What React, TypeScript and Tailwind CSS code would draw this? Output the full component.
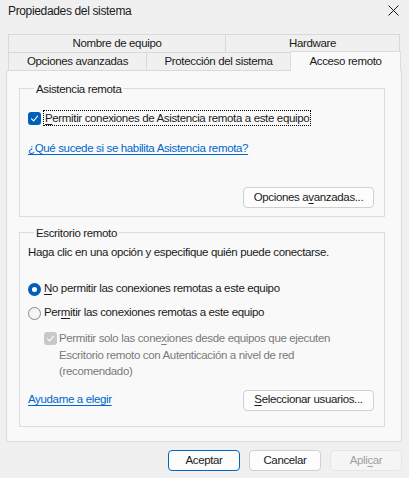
import React from 'react';

const Check = ({ color = 'white' }: { color?: string }) => (
  <svg width="9" height="9" viewBox="0 0 9 9" fill="none">
    <path d="M1.5 4.8 L3.6 6.8 L7.6 2.2" stroke={color} strokeWidth="1.1" strokeLinecap="round" strokeLinejoin="round" />
  </svg>
);

const GroupBox = ({ title, children, className }: { title: string; children: React.ReactNode; className?: string }) => (
  <div className={`border border-[#dcdcdc] ${className ?? ''}`}>
    <div className="-mt-[8px] ml-[6px] px-[2px] w-fit bg-[#f9f9f9] h-4 leading-4">{title}</div>
    {children}
  </div>
);

const Button = ({ children, width, primary, disabled }: { children: React.ReactNode; width: string; primary?: boolean; disabled?: boolean }) => (
  <div
    className={`h-[21px] ${width} rounded-[4px] flex items-center justify-center border ${
      primary
        ? 'border-[#0067c0] bg-[#fdfdfd] text-[#1a1a1a]'
        : disabled
        ? 'border-[#e5e5e5] bg-[#f5f5f5] text-[#a0a0a0]'
        : 'border-[#d0d0d0] bg-[#fdfdfd] text-[#1a1a1a]'
    }`}
  >
    {children}
  </div>
);

export default function App() {
  return (
    <div
      className="w-[409px] h-[478px] bg-[#f0f0f0] text-[11.5px] tracking-[-0.35px] text-[#1a1a1a] overflow-hidden"
      style={{ fontFamily: '"Liberation Sans", Arial, sans-serif' }}
    >
      {/* title bar */}
      <div className="h-[34px] flex items-start justify-between pt-[3px] pl-2 pr-[10px]">
        <span className="text-[12px] leading-4">Propiedades del sistema</span>
        <svg width="11" height="11" viewBox="0 0 11 11" className="mt-[2px]">
          <path d="M0.5 0.5 L10.5 10.5 M10.5 0.5 L0.5 10.5" stroke="#1a1a1a" strokeWidth="1" />
        </svg>
      </div>

      {/* tabs */}
      <div className="flex ml-2">
        <div className="h-[19px] w-[218px] border border-[#d9d9d9] flex items-center justify-center">Nombre de equipo</div>
        <div className="h-[19px] w-[175px] -ml-px border border-[#d9d9d9] flex items-center justify-center">Hardware</div>
      </div>
      <div className="flex items-end ml-2 h-[19px] -mt-px relative z-10">
        <div className="h-[19px] w-[139px] border border-[#d9d9d9] bg-[#f0f0f0] flex items-center justify-center">Opciones avanzadas</div>
        <div className="h-[19px] w-[145px] -ml-px border border-[#d9d9d9] bg-[#f0f0f0] flex items-center justify-center">Protección del sistema</div>
        <div className="h-[20px] w-[111px] -ml-px border border-b-0 border-[#dcdcdc] bg-[#f9f9f9] flex items-start justify-center pt-[1px]">Acceso remoto</div>
      </div>

      {/* panel */}
      <div className="ml-[6px] -mt-px w-[396px] h-[372px] border border-[#dcdcdc] bg-[#f9f9f9] pt-[17px] pl-[12px]">
        <GroupBox title="Asistencia remota" className="w-[366px] h-[129px] pl-2">
          <div className="mt-[13px] flex items-center h-4">
            <div className="w-[13px] h-[13px] rounded-[3px] bg-[#005fb8] flex items-center justify-center">
              <Check />
            </div>
            <span className="ml-[2px] px-px border border-dotted border-black leading-[14px]">
              <span className="underline underline-offset-2">P</span>ermitir conexiones de Asistencia remota a este equipo
            </span>
          </div>
          <div className="mt-[14px] h-4 leading-4 text-[#0066cc] underline underline-offset-2 w-fit">
            ¿Qué sucede si se habilita Asistencia remota?
          </div>
          <div className="mt-[31px] flex justify-end pr-[10px]">
            <Button width="w-[131px]">
              <span>
                Opciones a<span className="underline underline-offset-2">v</span>anzadas...
              </span>
            </Button>
          </div>
        </GroupBox>

        <GroupBox title="Escritorio remoto" className="mt-[15px] w-[366px] h-[195px] pl-2">
          <div className="mt-[3px] h-4 leading-4">Haga clic en una opción y especifique quién puede conectarse.</div>
          <div className="mt-[21px] flex items-center h-4">
            <div className="w-[13px] h-[13px] rounded-full bg-[#005fb8] flex items-center justify-center">
              <div className="w-[5px] h-[5px] rounded-full bg-white" />
            </div>
            <span className="ml-[3px]">
              <span className="underline underline-offset-2">N</span>o permitir las conexiones remotas a este equipo
            </span>
          </div>
          <div className="mt-[8px] flex items-center h-4">
            <div className="w-[13px] h-[13px] rounded-full border border-[#878787] bg-[#f6f6f6]" />
            <span className="ml-[3px]">
              Per<span className="underline underline-offset-2">m</span>itir las conexiones remotas a este equipo
            </span>
          </div>
          <div className="mt-[9px] flex items-start pl-[16px] text-[#7a7a7a]">
            <div className="mt-[2px] w-[13px] h-[13px] rounded-[3px] bg-[#c8c8c8] flex items-center justify-center shrink-0">
              <Check />
            </div>
            <div className="ml-[2px] leading-[16.5px]">
              <div>
                Permitir solo las cone<span className="underline underline-offset-2">x</span>iones desde equipos que ejecuten
              </div>
              <div>Escritorio remoto con Autenticación a nivel de red</div>
              <div>(recomendado)</div>
            </div>
          </div>
          <div className="mt-[10px] flex items-center justify-between pr-[10px]">
            <span className="text-[#0066cc] underline underline-offset-2">Ayudame a elegir</span>
            <Button width="w-[131px]">
              <span>
                <span className="underline underline-offset-2">S</span>eleccionar usuarios...
              </span>
            </Button>
          </div>
        </GroupBox>
      </div>

      {/* dialog buttons */}
      <div className="mt-[8px] flex justify-end gap-[9px] pr-[7px]">
        <Button width="w-[72px]" primary>
          Aceptar
        </Button>
        <Button width="w-[72px]">Cancelar</Button>
        <Button width="w-[72px]" disabled>
          <span>
            Apli<span className="underline underline-offset-2">c</span>ar
          </span>
        </Button>
      </div>
    </div>
  );
}
